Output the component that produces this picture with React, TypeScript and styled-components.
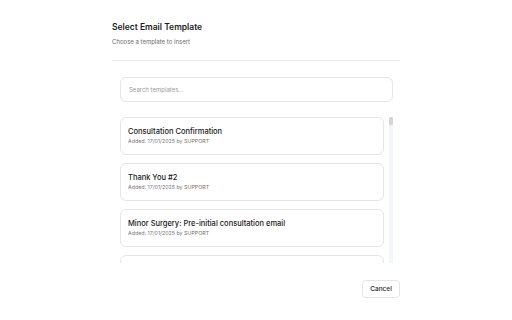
import React from "react";
import styled, { createGlobalStyle } from "styled-components";

const Global = createGlobalStyle`
  html, body { margin: 0; padding: 0; background: #ffffff; }
  body { font-family: Inter, "Noto Sans", sans-serif; color: #111827; }
  * { box-sizing: border-box; }
`;

const Dialog = styled.div`
  width: 288px;
  margin: 0 0 0 112px;
  padding-top: 22px;
  display: flex;
  flex-direction: column;
`;

const Header = styled.div`
  display: flex;
  flex-direction: column;
  gap: 5px;
  padding-bottom: 14px;
  border-bottom: 1px solid #ececef;
`;

const Title = styled.h2`
  margin: 0;
  font-size: 8.5px;
  line-height: 11px;
  font-weight: 600;
  color: #1c1c1f;
`;

const Subtitle = styled.p`
  margin: 0;
  font-size: 6px;
  line-height: 8px;
  color: #6b6b73;
`;

const Body = styled.div`
  padding: 16px 7px 0 8px;
  display: flex;
  flex-direction: column;
  gap: 14px;
`;

const Search = styled.input`
  height: 25px;
  width: 100%;
  border: 1px solid #e4e4e9;
  border-radius: 6px;
  padding: 0 8px;
  font-family: Inter, "Noto Sans", sans-serif;
  font-size: 6px;
  color: #111;
  outline: none;
  &::placeholder { color: #9a9aa2; }
`;

const ListArea = styled.div`
  display: flex;
  gap: 5px;
  height: 146px;
  margin-top: 1px;
`;

const List = styled.div`
  flex: 1;
  overflow: hidden;
  display: flex;
  flex-direction: column;
  gap: 8px;
`;

const Track = styled.div`
  width: 4px;
  background: #f4f5f9;
  display: flex;
  flex-direction: column;
`;

const Thumb = styled.div`
  height: 8px;
  background: #d4d4d9;
  border-radius: 1px;
`;

const Card = styled.div`
  flex: 0 0 38px;
  border: 1px solid #e4e4e9;
  border-radius: 6px;
  padding: 0 7px 1px;
  display: flex;
  flex-direction: column;
  justify-content: center;
  gap: 2px;
`;

const CardTitle = styled.div`
  font-size: 7.5px;
  line-height: 9px;
  font-weight: 500;
  color: #17171a;
`;

const Meta = styled.div`
  font-size: 5.3px;
  line-height: 7px;
  color: #74747c;
`;

const Author = styled.span`
  color: #7c6a62;
`;

const Footer = styled.div`
  display: flex;
  justify-content: flex-end;
  margin-top: 17px;
`;

const CancelButton = styled.button`
  height: 18px;
  width: 38px;
  border: 1px solid #e4e4e9;
  border-radius: 4px;
  background: #fff;
  font-family: Inter, "Noto Sans", sans-serif;
  font-size: 6.5px;
  font-weight: 500;
  color: #1c1c1f;
  padding: 0;
`;

const templates = [
  "Consultation Confirmation",
  "Thank You #2",
  "Minor Surgery: Pre-initial consultation email",
];

export default function App() {
  return (
    <>
      <Global />
      <Dialog>
        <Header>
          <Title>Select Email Template</Title>
          <Subtitle>Choose a template to insert</Subtitle>
        </Header>
        <Body>
          <Search placeholder="Search templates..." />
          <ListArea>
            <List>
              {templates.map((t, i) => (
                <Card key={i}>
                  <CardTitle>{t}</CardTitle>
                  <Meta>
                    Added: 17/01/2025 by <Author>SUPPORT</Author>
                  </Meta>
                </Card>
              ))}
              <Card />
            </List>
            <Track>
              <Thumb />
            </Track>
          </ListArea>
        </Body>
        <Footer>
          <CancelButton>Cancel</CancelButton>
        </Footer>
      </Dialog>
    </>
  );
}
